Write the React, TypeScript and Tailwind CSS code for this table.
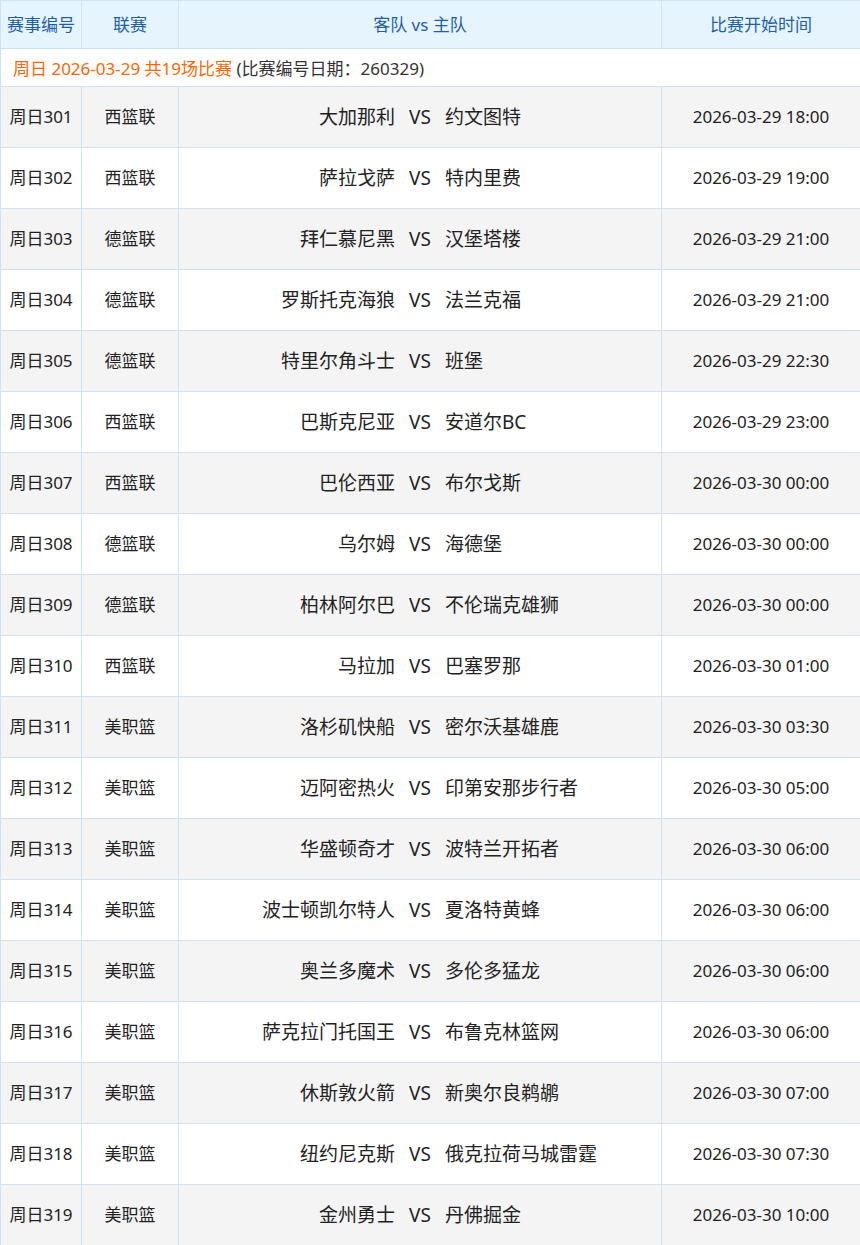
import React from "react";

const rows: [string, string, string, string, string][] = [
  ["周日301", "西篮联", "大加那利", "约文图特", "2026-03-29 18:00"],
  ["周日302", "西篮联", "萨拉戈萨", "特内里费", "2026-03-29 19:00"],
  ["周日303", "德篮联", "拜仁慕尼黑", "汉堡塔楼", "2026-03-29 21:00"],
  ["周日304", "德篮联", "罗斯托克海狼", "法兰克福", "2026-03-29 21:00"],
  ["周日305", "德篮联", "特里尔角斗士", "班堡", "2026-03-29 22:30"],
  ["周日306", "西篮联", "巴斯克尼亚", "安道尔BC", "2026-03-29 23:00"],
  ["周日307", "西篮联", "巴伦西亚", "布尔戈斯", "2026-03-30 00:00"],
  ["周日308", "德篮联", "乌尔姆", "海德堡", "2026-03-30 00:00"],
  ["周日309", "德篮联", "柏林阿尔巴", "不伦瑞克雄狮", "2026-03-30 00:00"],
  ["周日310", "西篮联", "马拉加", "巴塞罗那", "2026-03-30 01:00"],
  ["周日311", "美职篮", "洛杉矶快船", "密尔沃基雄鹿", "2026-03-30 03:30"],
  ["周日312", "美职篮", "迈阿密热火", "印第安那步行者", "2026-03-30 05:00"],
  ["周日313", "美职篮", "华盛顿奇才", "波特兰开拓者", "2026-03-30 06:00"],
  ["周日314", "美职篮", "波士顿凯尔特人", "夏洛特黄蜂", "2026-03-30 06:00"],
  ["周日315", "美职篮", "奥兰多魔术", "多伦多猛龙", "2026-03-30 06:00"],
  ["周日316", "美职篮", "萨克拉门托国王", "布鲁克林篮网", "2026-03-30 06:00"],
  ["周日317", "美职篮", "休斯敦火箭", "新奥尔良鹈鹕", "2026-03-30 07:00"],
  ["周日318", "美职篮", "纽约尼克斯", "俄克拉荷马城雷霆", "2026-03-30 07:30"],
  ["周日319", "美职篮", "金州勇士", "丹佛掘金", "2026-03-30 10:00"],
];

const font = { fontFamily: '"Noto Sans", "Noto Sans CJK SC", sans-serif' };

export default function App() {
  return (
    <div className="w-[860px] bg-white" style={font}>
      <table className="w-[860px] table-fixed border-collapse">
        <colgroup>
          <col className="w-[81px]" />
          <col className="w-[97px]" />
          <col className="w-[483px]" />
          <col className="w-[199px]" />
        </colgroup>
        <thead>
          <tr className="h-[48px] bg-[#e6f4fe] text-[#1f5fa6] text-[17px]">
            <th className="border border-[#cde2f2] font-normal p-0">赛事编号</th>
            <th className="border border-[#cde2f2] font-normal p-0">联赛</th>
            <th className="border border-[#cde2f2] font-normal p-0">客队 vs 主队</th>
            <th className="border border-[#cde2f2] font-normal p-0">比赛开始时间</th>
          </tr>
        </thead>
        <tbody>
          <tr className="h-[38px] bg-white">
            <td colSpan={4} className="border border-[#cde2f2] p-0 pl-[12px] pt-[3px] text-left text-[17px]">
              <span className="text-[#ff6600]">周日 2026-03-29 共19场比赛</span>
              <span className="text-[#333333]"> (比赛编号日期：260329)</span>
            </td>
          </tr>
          {rows.map((r, i) => (
            <tr key={r[0]} className={`h-[61px] ${i % 2 === 0 ? "bg-[#f4f4f4]" : "bg-white"} text-[#222222]`}>
              <td className="border border-[#cde2f2] p-0 text-center text-[17px]">{r[0]}</td>
              <td className="border border-[#cde2f2] p-0 text-center text-[17px]">{r[1]}</td>
              <td className="border border-[#cde2f2] p-0 text-[19px]">
                <div className="flex items-center">
                  <span className="flex-1 text-right pr-[13px]">{r[2]}</span>
                  <span className="w-[24px] text-center">VS</span>
                  <span className="flex-1 text-left pl-[13px]">{r[3]}</span>
                </div>
              </td>
              <td className="border border-[#cde2f2] p-0 text-center text-[17px]">{r[4]}</td>
            </tr>
          ))}
        </tbody>
      </table>
    </div>
  );
}
